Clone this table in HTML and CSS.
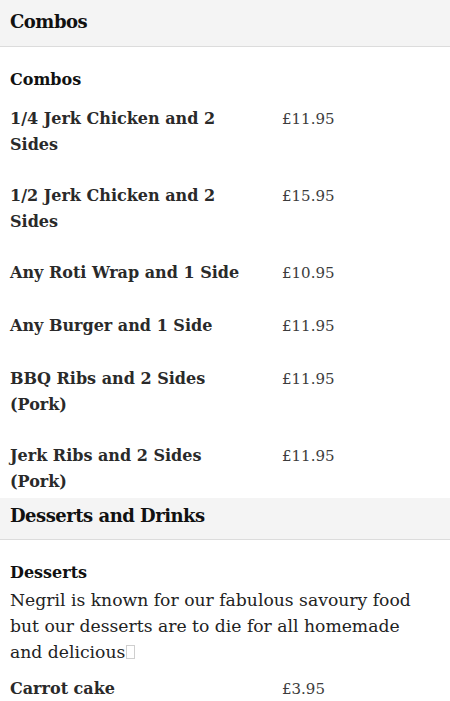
FILE: index.html
```html
<!DOCTYPE html>
<html lang="en">
<head>
<meta charset="utf-8">
<title>Menu</title>
<link rel="stylesheet" href="styles.css">
</head>
<body>
<div class="menu">
  <section class="category">
    <h2 class="band band-first">Combos</h2>
    <div class="content">
      <h3 class="sub">Combos</h3>
      <div class="item"><div class="name">1/4 Jerk Chicken and 2 Sides</div><div class="price">£11.95</div></div>
      <div class="item"><div class="name">1/2 Jerk Chicken and 2 Sides</div><div class="price">£15.95</div></div>
      <div class="item"><div class="name">Any Roti Wrap and 1 Side</div><div class="price">£10.95</div></div>
      <div class="item"><div class="name">Any Burger and 1 Side</div><div class="price">£11.95</div></div>
      <div class="item"><div class="name">BBQ Ribs and 2 Sides (Pork)</div><div class="price">£11.95</div></div>
      <div class="item item-last"><div class="name">Jerk Ribs and 2 Sides (Pork)</div><div class="price">£11.95</div></div>
    </div>
  </section>
  <section class="category">
    <h2 class="band">Desserts and Drinks</h2>
    <div class="content">
      <h3 class="sub sub-tight">Desserts</h3>
      <p class="desc">Negril is known for our fabulous savoury food but our desserts are to die for all homemade and delicious<span class="tofu"></span></p>
      <div class="item"><div class="name">Carrot cake</div><div class="price">£3.95</div></div>
    </div>
  </section>
</div>
</body>
</html>
```

FILE: styles.css
```css
html, body {
  margin: 0;
  padding: 0;
  background: #ffffff;
}

body {
  font-family: "DejaVu Serif", "Liberation Serif", serif;
  color: #222222;
  overflow: hidden;
}

.menu {
  width: 450px;
}

.band {
  margin: 0;
  background: #f4f4f4;
  border-bottom: 1px solid #dcdcdc;
  font-size: 18px;
  letter-spacing: -0.5px;
  font-weight: bold;
  color: #111111;
  line-height: 24px;
  padding: 6px 10px 11px;
}

.band-first {
  padding: 10px 10px 12px;
}

.content {
  padding: 20px 10px 3px;
}

.sub {
  margin: 0 0 13px;
  font-size: 16px;
  font-weight: bold;
  line-height: 26px;
  color: #111111;
}

.sub-tight {
  margin-bottom: 1px;
}

.item {
  display: flex;
  gap: 27px;
  min-height: 28px;
  margin-bottom: 25px;
}

.item-last {
  margin-bottom: 0;
}

.name {
  width: 245px;
  flex: none;
  font-size: 16px;
  font-weight: bold;
  line-height: 26px;
  color: #2a2a2a;
}

.price {
  font-size: 15px;
  line-height: 26px;
  color: #3c3c3c;
  font-weight: normal;
}

.desc {
  margin: 0 0 11px;
  max-width: 415px;
  font-size: 17.2px;
  line-height: 26px;
  color: #222222;
}

.tofu {
  display: inline-block;
  width: 7px;
  height: 12px;
  border: 1px solid #cfcfcf;
  margin-left: 1px;
  vertical-align: -1px;
}
```
